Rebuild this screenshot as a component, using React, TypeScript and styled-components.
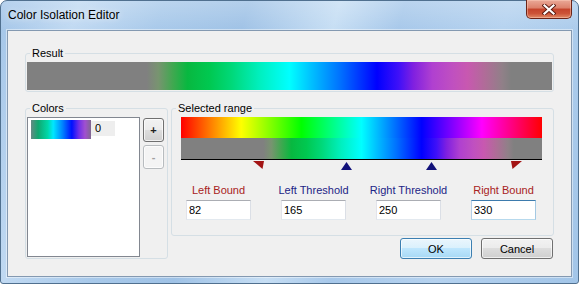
import styled, { createGlobalStyle } from 'styled-components'

const GlobalStyle = createGlobalStyle`
  *, *::before, *::after { box-sizing: border-box; }
  html, body { margin: 0; padding: 0; background: #fff; }
  body { font-family: 'Liberation Sans', Arial, sans-serif; font-size: 11px; color: #000; }
`

// hue spectrum, 0..360 degrees
const HUE =
  'linear-gradient(to right, #f00 0%, #ff0 16.667%, #0f0 33.333%, #0ff 50%, #00f 66.667%, #f0f 83.333%, #f00 100%)'

// isolated result, read off the picture (degree, colour)
const resultStops: [number, string][] = [
  [0, '#808080'],
  [82, '#808080'],
  [90, '#789470'],
  [100, '#40a850'],
  [110, '#08b840'],
  [125, '#00c850'],
  [140, '#00d878'],
  [160, '#00f0c0'],
  [180, '#00ffff'],
  [195, '#00c0ff'],
  [215, '#0070ff'],
  [240, '#0000ff'],
  [255, '#4010f8'],
  [265, '#8020e0'],
  [278, '#b040d0'],
  [292, '#c050c0'],
  [302, '#c858b0'],
  [314, '#b06c98'],
  [326, '#908088'],
  [332, '#808080'],
  [360, '#808080'],
]
const RESULT = `linear-gradient(to right, ${resultStops
  .map(([d, c]) => `${c} ${((d / 360) * 100).toFixed(2)}%`)
  .join(', ')})`

const SPECTRUM_W = 361

const Window = styled.div`
  width: 579px;
  height: 284px;
  display: flex;
  flex-direction: column;
  padding: 0 6px 6px;
  border: 1px solid #50708f;
  border-radius: 7px 7px 3px 3px;
  background: linear-gradient(to bottom, rgba(255, 255, 255, 0.22), rgba(255, 255, 255, 0) 30px),
    linear-gradient(
      105deg,
      #a3c5e8 0%,
      #c0d9f2 12%,
      #a8c9ea 25%,
      #9fc2e6 38%,
      #c6def4 52%,
      #a7c8ea 62%,
      #b5d2ef 78%,
      #a2c5e8 100%
    );
`

const TitleBar = styled.div`
  height: 29px;
  display: flex;
  justify-content: space-between;
  align-items: flex-start;
`

const Title = styled.div`
  padding: 7px 0 0 1px;
  font-size: 12px;
  line-height: 14px;
  color: #000;
  text-shadow: 0 0 6px rgba(255, 255, 255, 0.9);
`

const CloseButton = styled.div`
  width: 46px;
  height: 19px;
  margin-top: -1px;
  display: flex;
  align-items: center;
  justify-content: center;
  border: 1px solid #6b2418;
  border-top: none;
  border-radius: 0 0 5px 5px;
  background: linear-gradient(to bottom, #eaa998 0%, #dc806a 45%, #c4432b 50%, #cc5337 75%, #e08a66 100%);
  box-shadow: inset 0 0 0 1px rgba(255, 210, 190, 0.45);
`

const Client = styled.div`
  flex: 1;
  display: flex;
  flex-direction: column;
  padding: 15px 17px 0 17px;
  background: #f0f0f0;
  border: 1px solid #8499b1;
  box-shadow: 0 0 0 1px rgba(255, 255, 255, 0.45);
`

const Group = styled.fieldset`
  margin: 0;
  padding: 0;
  min-width: 0;
  border: 1px solid #d5dfe5;
  border-radius: 3px;
`

const Legend = styled.legend`
  margin-left: 4px;
  padding: 0 2px;
  font-size: 11px;
  line-height: 14px;
  color: #000;
`

const ResultBar = styled.div`
  height: 28px;
  margin: 2px 1px 1px 1px;
  background: ${RESULT};
`

const MiddleRow = styled.div`
  display: flex;
  align-items: flex-start;
  gap: 3px;
  margin-top: 9px;
`

const ColorsGroup = styled(Group)`
  flex: none;
  width: 143px;
`

const ColorsBody = styled.div`
  display: flex;
  gap: 3px;
  padding: 2px 3px 1px 1px;
`

const ListBox = styled.div`
  width: 113px;
  height: 140px;
  padding: 2px 0 0 3px;
  background: #fff;
  border: 1px solid #828790;
`

const ColorItem = styled.div`
  display: flex;
  align-items: flex-start;
`

const Swatch = styled.div`
  width: 60px;
  height: 19px;
  background: linear-gradient(
    to right,
    #668a84 0%,
    #10a870 12%,
    #00d8a8 28%,
    #00e8ff 37%,
    #0080ff 53%,
    #0010ff 68%,
    #7030e8 80%,
    #a050d0 90%,
    #806890 100%
  );
`

const NumBox = styled.div`
  width: 24px;
  height: 15px;
  margin-top: 1px;
  padding-left: 4px;
  background: #eeeeee;
  font-size: 11px;
  line-height: 15px;
`

const SideButtons = styled.div`
  display: flex;
  flex-direction: column;
  gap: 3px;
  padding-top: 1px;
`

const SmallButton = styled.div<{ $disabled?: boolean }>`
  width: 21px;
  height: 24px;
  display: flex;
  align-items: center;
  justify-content: center;
  border-radius: 3px;
  font-size: 11px;
  font-weight: bold;
  border: 1px solid ${(p) => (p.$disabled ? '#b8bcbf' : '#707070')};
  color: ${(p) => (p.$disabled ? '#a0a0a0' : '#202020')};
  background: ${(p) =>
    p.$disabled
      ? '#f4f4f4'
      : 'linear-gradient(to bottom, #f2f2f2 0%, #ebebeb 50%, #dddddd 50%, #cfcfcf 100%)'};
  box-shadow: inset 0 0 0 1px rgba(255, 255, 255, 0.7);
`

const RightColumn = styled.div`
  flex: 1;
  display: flex;
  flex-direction: column;
  gap: 2px;
`

const RangeBody = styled.div`
  padding: 2px 11px 15px 9px;
`

const HueBar = styled.div`
  width: ${SPECTRUM_W}px;
  height: 21px;
  background: ${HUE};
`

const IsolatedBar = styled.div`
  width: ${SPECTRUM_W}px;
  height: 21px;
  background: ${RESULT};
  border-bottom: 1px solid #000;
  box-sizing: content-box;
`

const MarkerTrack = styled.div`
  position: relative;
  width: ${SPECTRUM_W}px;
  height: 11px;
`

const Marker = styled.svg<{ $top: number }>`
  position: absolute;
  top: ${(p) => p.$top}px;
  display: block;
`

const Fields = styled.div`
  display: grid;
  grid-template-columns: repeat(4, 95px);
  margin: 13px -10px 0 -10px;
`

const Field = styled.div`
  display: flex;
  flex-direction: column;
  align-items: center;
  gap: 3px;
`

const FieldLabel = styled.div<{ $tone: 'bound' | 'threshold' }>`
  font-size: 11px;
  line-height: 13px;
  color: ${(p) => (p.$tone === 'bound' ? '#a82222' : '#1c2486')};
`

const Input = styled.input<{ $focused?: boolean }>`
  width: 65px;
  height: 20px;
  margin: 0;
  padding: 0 2px;
  font-family: 'Liberation Sans', Arial, sans-serif;
  font-size: 11px;
  color: #000;
  background: #fff;
  outline: none;
  border: 1px solid;
  border-radius: 0;
  border-color: ${(p) => (p.$focused ? '#3d7bad #a4c9e3 #b7d9ed #b5cfe7' : '#abadb3 #dbdfe6 #e3e9ef #e2e3ea')};
`

const ButtonRow = styled.div`
  display: flex;
  justify-content: flex-end;
  gap: 9px;
  padding-right: 1px;
`

const DialogButton = styled.div<{ $default?: boolean }>`
  width: 72px;
  height: 21px;
  display: flex;
  align-items: center;
  justify-content: center;
  border-radius: 3px;
  font-size: 11px;
  color: #000;
  border: 1px solid ${(p) => (p.$default ? '#3c7fb1' : '#707070')};
  background: ${(p) =>
    p.$default
      ? 'linear-gradient(to bottom, #eaf6fd 0%, #d9f0fc 50%, #bee6fd 50%, #a7d9f5 100%)'
      : 'linear-gradient(to bottom, #f2f2f2 0%, #ebebeb 50%, #dddddd 50%, #cfcfcf 100%)'};
  box-shadow: inset 0 0 0 1px rgba(255, 255, 255, 0.65);
`

const toPx = (deg: number) => (deg / 360) * SPECTRUM_W

const range = { leftBound: 82, leftThreshold: 165, rightThreshold: 250, rightBound: 330 }

function BoundMarker({ value, side }: { value: number; side: 'left' | 'right' }) {
  const x = toPx(value)
  const left = side === 'left' ? x - 10 : x - 1
  const points = side === 'left' ? '0,0 11,0 9.5,8' : '0,0 11,0 1.5,8'
  return (
    <Marker $top={1} width="11" height="9" viewBox="0 0 11 9" style={{ left }}>
      <polygon points={points} fill="#a31414" />
    </Marker>
  )
}

function ThresholdMarker({ value }: { value: number }) {
  return (
    <Marker $top={2} width="11" height="9" viewBox="0 0 11 9" style={{ left: toPx(value) - 5.5 }}>
      <polygon points="5.5,0 11,8 0,8" fill="#12127a" />
    </Marker>
  )
}

export default function App() {
  const fields = [
    { label: 'Left Bound', tone: 'bound' as const, value: range.leftBound },
    { label: 'Left Threshold', tone: 'threshold' as const, value: range.leftThreshold },
    { label: 'Right Threshold', tone: 'threshold' as const, value: range.rightThreshold },
    { label: 'Right Bound', tone: 'bound' as const, value: range.rightBound, focused: true },
  ]

  return (
    <>
      <GlobalStyle />
      <Window>
        <TitleBar>
          <Title>Color Isolation Editor</Title>
          <CloseButton>
            <svg width="14" height="11" viewBox="0 0 14 11">
              <path d="M2.5 1.5 L11.5 9.5 M11.5 1.5 L2.5 9.5" stroke="#5a1a10" strokeWidth="4" strokeLinecap="square" />
              <path d="M2.5 1.5 L11.5 9.5 M11.5 1.5 L2.5 9.5" stroke="#fff" strokeWidth="2.2" strokeLinecap="square" />
            </svg>
          </CloseButton>
        </TitleBar>
        <Client>
          <Group>
            <Legend>Result</Legend>
            <ResultBar />
          </Group>
          <MiddleRow>
            <ColorsGroup>
              <Legend>Colors</Legend>
              <ColorsBody>
                <ListBox>
                  <ColorItem>
                    <Swatch />
                    <NumBox>0</NumBox>
                  </ColorItem>
                </ListBox>
                <SideButtons>
                  <SmallButton>+</SmallButton>
                  <SmallButton $disabled>-</SmallButton>
                </SideButtons>
              </ColorsBody>
            </ColorsGroup>
            <RightColumn>
              <Group>
                <Legend>Selected range</Legend>
                <RangeBody>
                  <HueBar />
                  <IsolatedBar />
                  <MarkerTrack>
                    <BoundMarker value={range.leftBound} side="left" />
                    <ThresholdMarker value={range.leftThreshold} />
                    <ThresholdMarker value={range.rightThreshold} />
                    <BoundMarker value={range.rightBound} side="right" />
                  </MarkerTrack>
                  <Fields>
                    {fields.map((f) => (
                      <Field key={f.label}>
                        <FieldLabel $tone={f.tone}>{f.label}</FieldLabel>
                        <Input $focused={f.focused} defaultValue={String(f.value)} readOnly />
                      </Field>
                    ))}
                  </Fields>
                </RangeBody>
              </Group>
              <ButtonRow>
                <DialogButton $default>OK</DialogButton>
                <DialogButton>Cancel</DialogButton>
              </ButtonRow>
            </RightColumn>
          </MiddleRow>
        </Client>
      </Window>
    </>
  )
}
